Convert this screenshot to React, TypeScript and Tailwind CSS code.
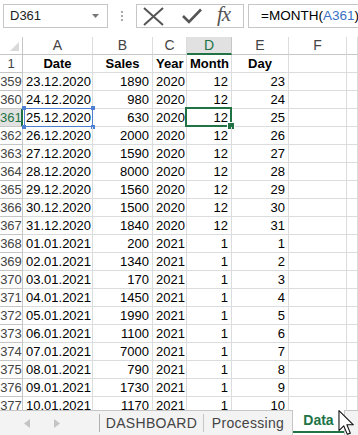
import React from "react";

const rows: [number, string, number, number, number, number][] = [
  [359, "23.12.2020", 1890, 2020, 12, 23],
  [360, "24.12.2020", 980, 2020, 12, 24],
  [361, "25.12.2020", 630, 2020, 12, 25],
  [362, "26.12.2020", 2000, 2020, 12, 26],
  [363, "27.12.2020", 1590, 2020, 12, 27],
  [364, "28.12.2020", 8000, 2020, 12, 28],
  [365, "29.12.2020", 1560, 2020, 12, 29],
  [366, "30.12.2020", 1500, 2020, 12, 30],
  [367, "31.12.2020", 1840, 2020, 12, 31],
  [368, "01.01.2021", 200, 2021, 1, 1],
  [369, "02.01.2021", 1340, 2021, 1, 2],
  [370, "03.01.2021", 170, 2021, 1, 3],
  [371, "04.01.2021", 1450, 2021, 1, 4],
  [372, "05.01.2021", 1990, 2021, 1, 5],
  [373, "06.01.2021", 1100, 2021, 1, 6],
  [374, "07.01.2021", 7000, 2021, 1, 7],
  [375, "08.01.2021", 790, 2021, 1, 8],
  [376, "09.01.2021", 1730, 2021, 1, 9],
  [377, "10.01.2021", 1170, 2021, 1, 10],
];

const cols = ["A", "B", "C", "D", "E", "F", ""];
const gridCols = "grid grid-cols-[23px_70px_60px_34px_45px_57px_58px_1fr]";
const cell = "h-[18px] border-r border-b border-[#dadcdd] leading-[17px] px-[3px] text-[13px] text-black whitespace-nowrap overflow-hidden";

function FormulaBar() {
  return (
    <div className="h-[37px] flex items-start pt-[4px] pl-[3px] bg-white">
      {/* name box */}
      <div className="w-[105px] h-[24px] border border-[#c6c6c6] flex items-center justify-between pl-[6px] pr-[8px]">
        <span className="text-[13px] text-[#222]">D361</span>
        <svg width="7" height="4" viewBox="0 0 7 4">
          <path d="M0 0 L7 0 L3.5 4 Z" fill="#777" />
        </svg>
      </div>
      <div className="w-[28px] h-[24px] flex flex-col items-center justify-center gap-[2px]">
        <span className="w-[2px] h-[2px] bg-[#aaa]" />
        <span className="w-[2px] h-[2px] bg-[#aaa]" />
        <span className="w-[2px] h-[2px] bg-[#aaa]" />
      </div>
      {/* cancel / enter / fx */}
      <div className="w-[108px] h-[24px] border border-[#c6c6c6] flex items-center pl-[6px]">
        <svg width="21" height="19" viewBox="0 0 21 19">
          <path d="M1 1 L20 18 M20 1 L1 18" stroke="#555" strokeWidth="2" />
        </svg>
        <svg width="20" height="16" viewBox="0 0 20 16" className="ml-[18px]">
          <path d="M1 8 L7 14 L19 1.5" stroke="#555" strokeWidth="2.6" fill="none" />
        </svg>
        <span className="ml-[15px] text-[21px] leading-none italic text-[#555] font-['Liberation_Serif',serif] tracking-[-1px] -mt-[3px]">
          fx
        </span>
      </div>
      <div className="flex-1 h-[24px] ml-[4px] -mr-[2px] border border-[#c6c6c6] flex items-center pl-[12px] text-[13.5px] text-black whitespace-nowrap overflow-hidden">
        =MONTH(<span className="text-[#3a6fc4]">A361</span>)
      </div>
    </div>
  );
}

function HeaderRow() {
  return (
    <div className={gridCols}>
      <div className="h-[18px] border-r border-b border-[#c6c6c6] relative bg-white">
        <svg width="9" height="9" viewBox="0 0 9 9" className="absolute right-[3px] bottom-[3px]">
          <path d="M9 0 L9 9 L0 9 Z" fill="#d9d9d9" />
        </svg>
      </div>
      {cols.map((c, i) =>
        c === "D" ? (
          <div
            key={i}
            className="h-[18px] border-r border-[#c6c6c6] border-b-2 border-b-[#217346] bg-[#e1e1e1] text-center text-[14px] leading-[17px] text-[#217346]"
          >
            {c}
          </div>
        ) : (
          <div
            key={i}
            className="h-[18px] border-r border-b border-[#dadcdd] border-b-[#c6c6c6] bg-white text-center text-[14px] leading-[17px] text-[#444]"
          >
            {c}
          </div>
        )
      )}
    </div>
  );
}

function Sheet() {
  return (
    <div className="flex-1 overflow-hidden bg-white">
      <HeaderRow />
      <div className={gridCols}>
        <div className="h-[18px] border-r border-b border-[#c6c6c6] text-center text-[13px] leading-[17px] text-[#444]">1</div>
        <div className={`${cell} text-center font-bold`}>Date</div>
        <div className={`${cell} text-center font-bold`}>Sales</div>
        <div className={`${cell} text-center font-bold`}>Year</div>
        <div className={`${cell} text-center font-bold`}>Month</div>
        <div className={`${cell} text-center font-bold`}>Day</div>
        <div className={cell} />
        <div className={cell} />
      </div>
      {rows.map(([n, date, sales, year, month, day]) => {
        const sel = n === 361;
        return (
          <div key={n} className={gridCols}>
            {sel ? (
              <div className="h-[18px] border-r-2 border-r-[#217346] border-b border-[#c6c6c6] bg-[#e1e1e1] text-center text-[13px] leading-[17px] text-[#217346]">
                {n}
              </div>
            ) : (
              <div className="h-[18px] border-r border-b border-[#c6c6c6] text-center text-[13px] leading-[17px] text-[#444]">
                {n}
              </div>
            )}
            <div className={`${cell} text-right relative overflow-visible`}>
              {date}
              {sel && (
                <div className="absolute left-[1px] top-[-1px] right-[-1px] bottom-[-1px] border-[1.5px] border-[#4f7fd0]">
                  <span className="absolute -left-[3px] -top-[3px] w-[4px] h-[4px] bg-[#4f7fd0]" />
                  <span className="absolute -right-[3px] -top-[3px] w-[4px] h-[4px] bg-[#4f7fd0]" />
                  <span className="absolute -left-[3px] -bottom-[3px] w-[4px] h-[4px] bg-[#4f7fd0]" />
                  <span className="absolute -right-[3px] -bottom-[3px] w-[4px] h-[4px] bg-[#4f7fd0]" />
                </div>
              )}
            </div>
            <div className={`${cell} text-right`}>{sales}</div>
            <div className={`${cell} text-right`}>{year}</div>
            <div className={`${cell} text-right relative overflow-visible`}>
              {month}
              {sel && (
                <div className="absolute left-[-2px] top-[-2px] right-[-1px] bottom-[-1px] border-2 border-[#217346]">
                  <span className="absolute -right-[4px] -bottom-[4px] w-[6px] h-[6px] bg-[#217346] outline outline-1 outline-white" />
                </div>
              )}
            </div>
            <div className={`${cell} text-right`}>{day}</div>
            <div className={cell} />
            <div className={cell} />
          </div>
        );
      })}
    </div>
  );
}

function TabBar() {
  return (
    <div className="h-[25px] flex bg-[#f3f3f3] border-t border-[#c6c6c6] text-[14px] relative">
      <div className="w-[99px] flex items-center">
        <svg width="6" height="9" viewBox="0 0 6 9" className="ml-[24px]">
          <path d="M6 0 L6 9 L0 4.5 Z" fill="#c4c4c4" />
        </svg>
        <svg width="6" height="9" viewBox="0 0 6 9" className="ml-[24px]">
          <path d="M0 0 L0 9 L6 4.5 Z" fill="#c4c4c4" />
        </svg>
      </div>
      <div className="w-[1px] my-[3px] bg-[#b0b0b0]" />
      <div className="w-[103px] flex items-center justify-center text-[#444] tracking-[0.3px]">DASHBOARD</div>
      <div className="w-[1px] my-[3px] bg-[#c6c6c6]" />
      <div className="w-[88px] flex items-center justify-center text-[#444] tracking-[0.3px]">Processing</div>
      <div className="w-[53px] -mt-[1px] bg-white border-l border-r border-[#c6c6c6] flex flex-col items-center">
        <span className="flex-1 flex items-center font-bold text-[#217346]">Data</span>
        <span className="h-[2px] w-full bg-[#217346] mb-[2px]" />
      </div>
      <div className="flex-1" />
      {/* mouse pointer */}
      <svg width="17" height="26" viewBox="0 0 12 19" className="absolute left-[338px] top-[-1px]">
        <path d="M0.5 0.5 L0.5 15 L4 11.6 L6.6 17.8 L8.8 16.9 L6.3 10.8 L11 10.8 Z" fill="white" stroke="#111" strokeWidth="0.8" strokeLinejoin="round" />
      </svg>
    </div>
  );
}

export default function App() {
  return (
    <div className="w-[358px] h-[435px] flex flex-col overflow-hidden bg-white font-['Liberation_Sans',Arial,sans-serif]">
      <FormulaBar />
      <Sheet />
      <TabBar />
    </div>
  );
}
